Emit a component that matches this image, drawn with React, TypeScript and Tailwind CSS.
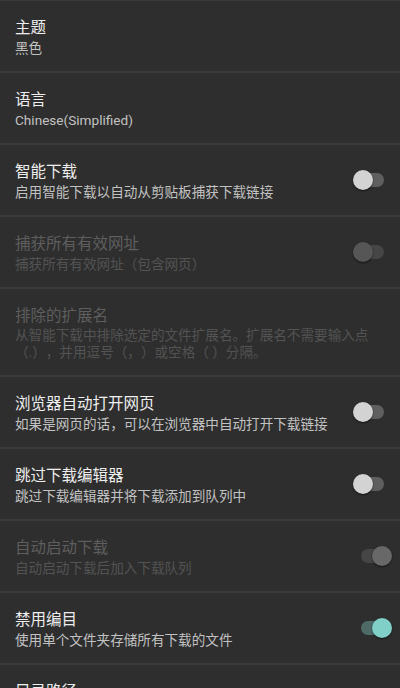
import React from "react";

type SwitchState = "off" | "on" | "disabledOff" | "disabledOn";

function Switch({ state }: { state: SwitchState }) {
  const on = state === "on" || state === "disabledOn";
  const track =
    state === "on"
      ? "bg-[#4f6b68]"
      : state === "off"
      ? "bg-[#5f5f5f]"
      : "bg-[#464646]";
  const thumb =
    state === "on"
      ? "bg-[#80d0c8]"
      : state === "off"
      ? "bg-[#d3d3d3]"
      : state === "disabledOn"
      ? "bg-[#686868]"
      : "bg-[#565656]";
  return (
    <div className="relative w-[39px] h-[20px] shrink-0">
      <div className={`absolute left-[8px] right-[8px] top-[3px] h-[14px] rounded-full ${track}`} />
      <div
        className={`absolute top-0 w-[20px] h-[20px] rounded-full shadow-[0_1px_2px_rgba(0,0,0,0.6)] ${thumb} ${
          on ? "left-[19px]" : "left-0"
        }`}
      />
    </div>
  );
}

type Row = {
  title: string;
  sub?: string;
  disabled?: boolean;
  sw?: SwitchState;
  tall?: boolean;
};

const rows: Row[] = [
  { title: "主题", sub: "黑色" },
  { title: "语言", sub: "Chinese(Simplified)" },
  { title: "智能下载", sub: "启用智能下载以自动从剪贴板捕获下载链接", sw: "off" },
  { title: "捕获所有有效网址", sub: "捕获所有有效网址（包含网页）", disabled: true, sw: "disabledOff" },
  {
    title: "排除的扩展名",
    sub: "从智能下载中排除选定的文件扩展名。扩展名不需要输入点（.），并用逗号（，）或空格（ ）分隔。",
    disabled: true,
    tall: true,
  },
  { title: "浏览器自动打开网页", sub: "如果是网页的话，可以在浏览器中自动打开下载链接", sw: "off" },
  { title: "跳过下载编辑器", sub: "跳过下载编辑器并将下载添加到队列中", sw: "off" },
  { title: "自动启动下载", sub: "自动启动下载后加入下载队列", disabled: true, sw: "disabledOn" },
  { title: "禁用编目", sub: "使用单个文件夹存储所有下载的文件", sw: "on" },
  { title: "目录路径", sub: "/storage/emulated/0/Download" },
];

export default function App() {
  return (
    <div
      className="w-[400px] h-[688px] overflow-hidden bg-[#2e2e2e] border-t border-[#3a3a3a] [text-spacing-trim:space-all]"
      style={{ fontFamily: 'Roboto, "Noto Sans CJK SC", "Noto Sans", sans-serif' }}
    >
      {rows.map((r, i) => (
        <div
          key={i}
          className={`flex items-start pl-[15px] pr-[8px] border-b-2 border-[#3b3b3b] ${
            r.tall ? "h-[88px]" : "h-[72px]"
          } ${i === 0 ? "h-[71px]" : ""}`}
        >
          <div className="flex-1 min-w-0 pt-[17px]">
            <div
              className={`text-[15.5px] leading-[21px] ${
                r.disabled ? "text-[#5e5e5e]" : "text-[#eeeeee]"
              }`}
            >
              {r.title}
            </div>
            {r.sub && (
              <div
                className={`text-[13.6px] ${r.tall ? "leading-[17px] pr-[6px]" : "leading-[18px]"} ${
                  r.disabled ? "text-[#535353]" : "text-[#c2c2c2]"
                }`}
              >
                {r.sub}
              </div>
            )}
          </div>
          {r.sw && (
            <div className="pt-[25px] pl-[10px]">
              <Switch state={r.sw} />
            </div>
          )}
        </div>
      ))}
    </div>
  );
}
